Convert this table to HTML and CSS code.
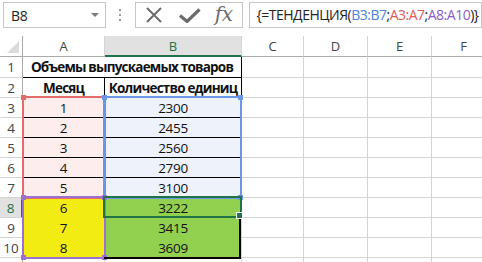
FILE: index.html
```html
<!DOCTYPE html>
<html>
<head>
<meta charset="utf-8">
<link rel="stylesheet" href="styles.css">
</head>
<body>
<div class="toolbar">
  <div class="namebox"><span class="name">B8</span><span class="arrow"></span></div>
  <div class="dots"><i></i><i></i><i></i></div>
  <div class="buttons">
    <svg class="ic-x" width="18" height="18" viewBox="0 0 18 18"><path d="M2 2 L16 16 M16 2 L2 16" stroke="#6b6b6b" stroke-width="2" fill="none"/></svg>
    <svg class="ic-ok" width="22" height="15" viewBox="0 0 22 15"><path d="M1 7.5 L8 13.5 L20.5 1.5" stroke="#6b6b6b" stroke-width="3.2" fill="none"/></svg>
    <span class="fx">fx</span>
  </div>
  <div class="formula">{=ТЕНДЕНЦИЯ(<span class="f-blue">B3:B7</span>;<span class="f-red">A3:A7</span>;<span class="f-purple">A8:A10</span>)}</div>
</div>
<div class="sheet">
  <div class="grid">
    <div class="hd corner"><span class="tri"></span></div>
    <div class="hd col">A</div>
    <div class="hd col sel-col">B</div>
    <div class="hd col">C</div>
    <div class="hd col">D</div>
    <div class="hd col">E</div>
    <div class="hd col">F</div>

    <div class="hd row r1">1</div>
    <div class="c span2 bold bk-b bk-l bk-r r1">Объемы выпускаемых товаров</div>
    <div class="c r1"></div><div class="c r1"></div><div class="c r1"></div><div class="c r1"></div>

    <div class="hd row">2</div>
    <div class="c bold bk-b bk-r bk-l">Месяц</div>
    <div class="c bold bk-b bk-r">Количество единиц</div>
    <div class="c"></div><div class="c"></div><div class="c"></div><div class="c"></div>

    <div class="hd row">3</div>
    <div class="c pink bk-b">1</div>
    <div class="c blue bk-b">2300</div>
    <div class="c"></div><div class="c"></div><div class="c"></div><div class="c"></div>

    <div class="hd row">4</div>
    <div class="c pink bk-b">2</div>
    <div class="c blue bk-b">2455</div>
    <div class="c"></div><div class="c"></div><div class="c"></div><div class="c"></div>

    <div class="hd row">5</div>
    <div class="c pink bk-b">3</div>
    <div class="c blue bk-b">2560</div>
    <div class="c"></div><div class="c"></div><div class="c"></div><div class="c"></div>

    <div class="hd row">6</div>
    <div class="c pink bk-b">4</div>
    <div class="c blue bk-b">2790</div>
    <div class="c"></div><div class="c"></div><div class="c"></div><div class="c"></div>

    <div class="hd row">7</div>
    <div class="c pink">5</div>
    <div class="c blue">3100</div>
    <div class="c"></div><div class="c"></div><div class="c"></div><div class="c"></div>

    <div class="hd row sel-row">8</div>
    <div class="c yellow no-b">6</div>
    <div class="c green white-b">3222</div>
    <div class="c"></div><div class="c"></div><div class="c"></div><div class="c"></div>

    <div class="hd row">9</div>
    <div class="c yellow no-b">7</div>
    <div class="c green no-b">3415</div>
    <div class="c"></div><div class="c"></div><div class="c"></div><div class="c"></div>

    <div class="hd row">10</div>
    <div class="c yellow">8</div>
    <div class="c green">3609</div>
    <div class="c"></div><div class="c"></div><div class="c"></div><div class="c"></div>

    <div class="hd row"></div>
    <div class="c"></div><div class="c"></div><div class="c"></div><div class="c"></div><div class="c"></div><div class="c"></div>
  </div>

  <div class="rng rng-red"><b class="h tl"></b><b class="h tr"></b><b class="h bl"></b><b class="h br"></b></div>
  <div class="rng rng-blue"><b class="h tl"></b><b class="h tr"></b><b class="h bl"></b><b class="h br"></b></div>
  <div class="rng rng-purple"><b class="h tl"></b><b class="h tr"></b><b class="h bl"></b><b class="h br"></b></div>
  <div class="rng rng-black"></div>
  <div class="rng rng-green"><b class="h br"></b></div>
</div>
</body>
</html>
```
FILE: styles.css
```css
html, body {
  margin: 0;
  padding: 0;
  background: #ffffff;
  overflow: hidden;
}
body {
  width: 482px;
  height: 262px;
  font-family: "Open Sans", "Noto Sans", sans-serif;
}

/* ---------- toolbar ---------- */
.toolbar {
  height: 36px;
  display: flex;
  align-items: flex-start;
  padding-top: 2px;
  box-sizing: border-box;
}
.namebox {
  margin-left: 3px;
  width: 103px;
  height: 26px;
  box-sizing: border-box;
  border: 1px solid #c6c6c6;
  display: flex;
  align-items: center;
  justify-content: space-between;
  padding: 0 6px 0 7px;
}
.name {
  font-size: 14px;
  color: #222;
  letter-spacing: -0.3px;
}
.arrow {
  width: 0;
  height: 0;
  border-left: 4px solid transparent;
  border-right: 4px solid transparent;
  border-top: 4px solid #7a7a7a;
}
.dots {
  width: 29px;
  height: 26px;
  display: flex;
  flex-direction: column;
  align-items: center;
  justify-content: center;
  gap: 3px;
}
.dots i {
  display: block;
  width: 2px;
  height: 2px;
  background: #9a9a9a;
}
.buttons {
  width: 108px;
  height: 26px;
  box-sizing: border-box;
  border: 1px solid #c6c6c6;
  display: flex;
  align-items: center;
  padding-left: 9px;
}
.ic-x { margin-right: 16px; }
.ic-ok { margin-right: 14px; }
.fx {
  font-family: "DejaVu Serif", "Liberation Serif", serif;
  font-style: italic;
  font-size: 20px;
  color: #6b6b6b;
  line-height: 20px;
  margin-top: -3px;
  letter-spacing: -0.5px;
}
.formula {
  margin-left: 6px;
  width: 234px;
  height: 26px;
  box-sizing: border-box;
  border: 1px solid #c6c6c6;
  font-size: 14px;
  line-height: 24px;
  padding-left: 7px;
  color: #222;
  white-space: nowrap;
  overflow: hidden;
  letter-spacing: -0.5px;
}
.f-blue { color: #4f81d9; }
.f-red { color: #e05a5a; }
.f-purple { color: #8a5cc6; }

/* ---------- sheet ---------- */
.sheet {
  position: relative;
}
.grid {
  display: grid;
  grid-template-columns: 23px 82px 137px 62px 64px 64px 64px;
  grid-template-rows: 21px 21px repeat(9, 20px) 20px;
  width: 496px;
}
.grid > div {
  box-sizing: border-box;
  border-right: 1px solid #d4d4d4;
  border-bottom: 1px solid #d4d4d4;
  display: flex;
  align-items: center;
  justify-content: center;
  white-space: nowrap;
  overflow: hidden;
}
.hd {
  background: #ffffff;
  color: #444444;
  font-family: "Open Sans", "Noto Sans", sans-serif;
  font-size: 13px;
  border-color: #ababab !important;
}
.hd.col { border-right-color: #d4d4d4 !important; }
.hd.row {
  border-bottom-color: #d4d4d4 !important;
  font-size: 13.5px;
}
.corner {
  position: relative;
}
.tri {
  position: absolute;
  right: 3px;
  bottom: 3px;
  width: 0;
  height: 0;
  border-left: 12px solid transparent;
  border-bottom: 12px solid #dcdcdc;
}
.sel-col {
  background: #e1e1e1 !important;
  color: #217346 !important;
  border-bottom: 2px solid #217346 !important;
}
.sel-row {
  background: #e1e1e1 !important;
  color: #217346 !important;
  border-right: 2px solid #217346 !important;
}
.c {
  font-family: "Open Sans", "Noto Sans", sans-serif;
  font-size: 13.5px;
  color: #111;
  letter-spacing: -0.3px;
}
.bold {
  font-weight: 700;
  letter-spacing: -0.8px;
}
.span2 { grid-column: span 2; }
.bk-b { border-bottom-color: #000 !important; }
.bk-r { border-right-color: #000 !important; }
.pink { background: #fdeded; border-right-color: transparent !important; }
.blue { background: #edf2fb; }
.yellow { background: #f3ec12; }
.green { background: #92d050; }
.no-b { border-bottom-color: transparent !important; }
.white-b { border-bottom-color: #ffffff !important; }

/* ---------- range finder overlays ---------- */
.rng {
  position: absolute;
  box-sizing: border-box;
  border: 2px solid;
}
.rng-red {
  left: 22px; top: 60px; width: 84px; height: 103px;
  border-color: #e46b6b;
}
.rng-blue {
  left: 103px; top: 60px; width: 139px; height: 103px;
  border-color: #6b97e8;
}
.rng-purple {
  left: 22px; top: 160px; width: 84px; height: 63px;
  border-color: #9b70cf;
}
.rng-green {
  left: 103px; top: 160px; width: 139px; height: 22px;
  border-color: #217346;
}
.rng-black {
  left: 104px; top: 181px; width: 137px; height: 42px;
  border: none;
  border-right: 2px solid #000;
  border-bottom: 2px solid #000;
}
.h {
  position: absolute;
  width: 5px;
  height: 5px;
  background: inherit;
}
.rng-red .h { background: #e46b6b; }
.rng-blue .h { background: #6b97e8; }
.rng-purple .h { background: #9b70cf; }
.rng-green .h { background: #217346; border: 1px solid #fff; width: 5px; height: 5px; }
.tl { left: -3px; top: -3px; }
.tr { right: -3px; top: -3px; }
.bl { left: -3px; bottom: -3px; }
.br { right: -3px; bottom: -3px; }
```
